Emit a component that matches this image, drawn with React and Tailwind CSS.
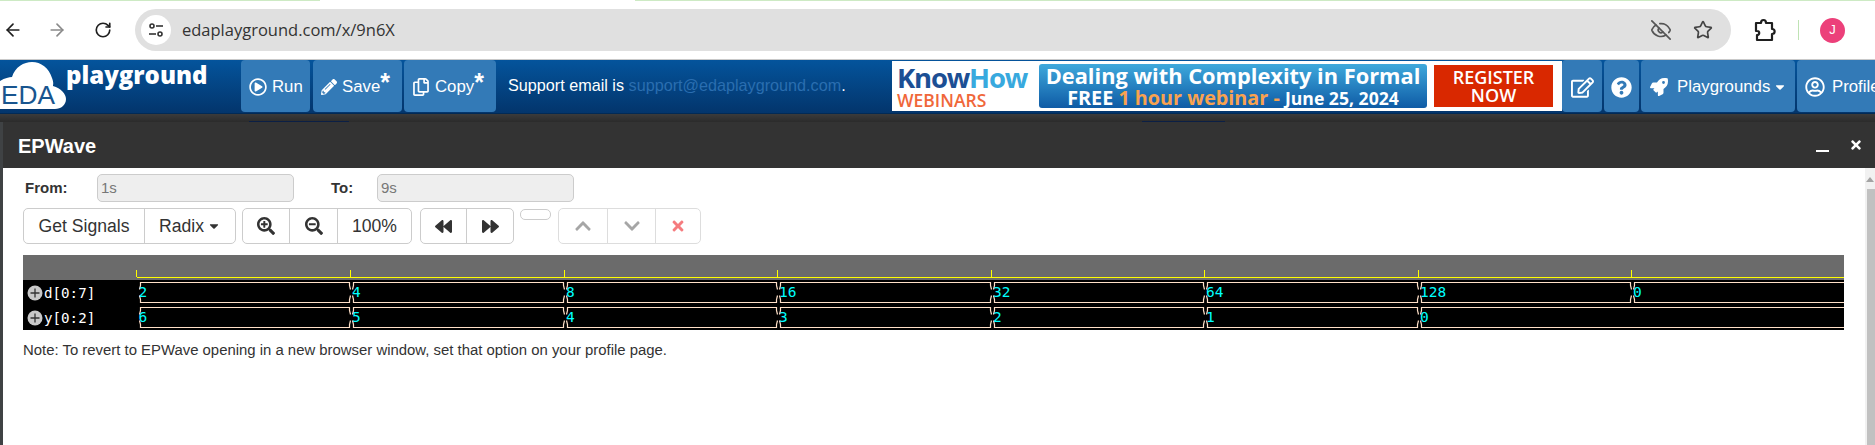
import { ArrowLeft, ArrowRight, RotateCw, EyeOff, Star } from 'lucide-react';
import {
  FaRegPlayCircle,
  FaPencilAlt,
  FaRegCopy,
  FaRegEdit,
  FaQuestionCircle,
  FaRocket,
  FaRegUserCircle,
  FaSearchPlus,
  FaSearchMinus,
  FaBackward,
  FaForward,
  FaChevronUp,
  FaChevronDown,
  FaTimes,
  FaCaretDown,
} from 'react-icons/fa';

const TICKS = [113.5, 327, 541, 754, 968, 1181, 1395, 1608];
const D_VALUES = ['2', '4', '8', '16', '32', '64', '128', '0'];
const Y_VALUES = ['6', '5', '4', '3', '2', '1', '0'];
const WAVE_END = 1821;

function TuneIcon() {
  return (
    <svg width="18" height="18" viewBox="0 0 18 18" fill="none" stroke="#333" strokeWidth="1.6">
      <circle cx="5" cy="5" r="2" />
      <path d="M9 5h7" />
      <circle cx="13" cy="13" r="2" />
      <path d="M2 13h7" />
    </svg>
  );
}

function PuzzleIcon() {
  return (
    <svg width="24" height="26" viewBox="0 0 24 26" fill="none" stroke="#1f1f1f" strokeWidth="2.2" strokeLinejoin="round">
      <path d="M3 6h5c0-4 5-4 5 0h6v6c3.500 0 3.500 5 0 5v6H4v-5c3 0 3-4 0-4H3z" />
    </svg>
  );
}

function Logo() {
  return (
    <div className="flex w-[241px] shrink-0 items-start">
      <svg width="66" height="50" viewBox="0 0 66 50" className="mt-[1px] shrink-0">
        <path
          d="M0 20c5-3 9-4 12-4C15 6 24 1 32 1c9 0 17 6 20 16 2 5 1 7 1 8 8 2 13 8 13 13 0 6-5 10-11 10H0z"
          fill="#fff"
        />
        <text x="1" y="43" fontFamily="Liberation Sans, Arial, sans-serif" fontSize="25" fill="#18558f" textLength="54" lengthAdjust="spacingAndGlyphs">
          EDA
        </text>
      </svg>
      <span className="mt-[-3px] w-[144px] font-['Open_Sans',sans-serif] text-[24px] leading-[36px] font-extrabold text-white">playground</span>
    </div>
  );
}

function NavButton({ className, children }) {
  return (
    <div className={`flex h-[52px] shrink-0 items-center gap-[5px] rounded-[4px] bg-[#337ab7] pt-[2px] text-[16.8px] text-white ${className}`}>
      {children}
    </div>
  );
}

function Asterisk() {
  return <span className="mb-[9px] ml-[-5px] text-[25px] leading-none font-bold">*</span>;
}

function Banner() {
  return (
    <div className="mt-[1px] flex h-[50px] w-[670px] shrink-0 items-center bg-white">
      <div className="ml-[5px] flex w-[142px] shrink-0 flex-col font-['Open_Sans',sans-serif]">
        <div className="text-[27.500px] leading-[27px] font-bold tracking-[-1.2px] whitespace-nowrap text-[#1c4f94]">
          Know<span className="text-[#38a9de]">How</span>
        </div>
        <div className="text-[17.500px] leading-[18px] font-semibold whitespace-nowrap text-[#f0673a]">WEBINARS</div>
      </div>
      <div className="flex h-[44px] w-[388px] shrink-0 flex-col items-center justify-center rounded-[3px] bg-gradient-to-b from-[#3fa9dc] to-[#0f5ba5] font-['Open_Sans',sans-serif] font-bold whitespace-nowrap text-white">
        <div className="text-[21.800px] leading-[24px]">Dealing with Complexity in Formal</div>
        <div className="text-[19.800px] leading-[20px]">
          FREE <span className="text-[#f9a24f]">1 hour webinar -</span> <span className="text-[17.600px]">June 25, 2024</span>
        </div>
      </div>
      <div className="ml-[7px] flex h-[42px] w-[119px] shrink-0 flex-col items-center justify-center bg-[#d92800] font-['Open_Sans',sans-serif] text-[18px] leading-[18px] font-semibold text-white">
        <div>REGISTER</div>
        <div>NOW</div>
      </div>
    </div>
  );
}

function ToolButton({ className = '', children }) {
  return (
    <div className={`flex h-full items-center justify-center border-r border-[#ccc] last:border-r-0 ${className}`}>{children}</div>
  );
}

function ToolGroup({ className = '', children }) {
  return (
    <div className={`flex h-[36px] shrink-0 rounded-[5px] border border-[#ccc] text-[17.6px] text-[#333] ${className}`}>{children}</div>
  );
}

function WaveRow({ top, values }) {
  const t = top + 0.5;
  const bottom = t + 20;
  const mid = t + 10;
  let d = '';
  values.forEach((_, i) => {
    const last = i + 1 === values.length;
    const left = Math.round(TICKS[i]) + 2.5;
    if (last) {
      d += `M${left} ${mid - 3}L${left + 1} ${mid - 7}V${t}H${WAVE_END}`;
      d += `M${left} ${mid + 3}L${left + 1} ${mid + 7}V${bottom}H${WAVE_END}`;
      return;
    }
    const right = Math.round(TICKS[i + 1]) - 0.5;
    d += `M${left} ${mid - 3}L${left + 1} ${mid - 7}V${t}H${right}V${mid - 7}L${right + 1} ${mid - 3}`;
    d += `M${left} ${mid + 3}L${left + 1} ${mid + 7}V${bottom}H${right}V${mid + 7}L${right + 1} ${mid + 3}`;
  });
  return (
    <>
      <path d={d} fill="none" stroke="#ffe0c8" strokeWidth="1.2" />
      {values.map((value, i) => (
        <text key={i} x={TICKS[i] + 2} y={top + 15} fill="#00ffff" fontFamily="DejaVu Sans Mono, monospace" fontSize="14.500">
          {value}
        </text>
      ))}
    </>
  );
}

function SignalLabel({ y, label }) {
  return (
    <>
      <circle cx="12" cy={y - 5} r="7.5" fill="#c8c8c8" />
      <path d={`M7.500 ${y - 5}h9M12 ${y - 9.500}v9`} stroke="#333" strokeWidth="1.300" />
      <text x="21" y={y} fill="#fff" fontFamily="DejaVu Sans Mono, monospace" fontSize="14.200">
        {label}
      </text>
    </>
  );
}

function Waveform() {
  return (
    <svg width="1821" height="75" viewBox="0 0 1821 75" className="block">
      <rect width="1821" height="25" fill="#6b6b6b" />
      <rect y="25" width="1821" height="50" fill="#000" />
      <rect x="114" y="22" width="1707" height="1" fill="#ffff00" />
      {TICKS.map((x) => (
        <rect key={x} x={Math.round(x - 0.5)} y="15" width="1" height="7" fill="#ffff00" />
      ))}
      <SignalLabel y={43} label="d[0:7]" />
      <SignalLabel y={68} label="y[0:2]" />
      <WaveRow top={27} values={D_VALUES} />
      <WaveRow top={52} values={Y_VALUES} />
    </svg>
  );
}

export default function App() {
  return (
    <div className="flex h-[445px] w-[1875px] flex-col overflow-hidden bg-white font-['Liberation_Sans',Arial,sans-serif]">
      {/* browser chrome */}
      <div className="flex h-[59px] shrink-0 flex-col">
        <div className="flex h-px shrink-0">
          <div className="w-[320px] bg-[#cdeac4]" />
          <div className="ml-[315px] flex-1 bg-[#cdeac4]" />
        </div>
        <div className="flex flex-1 items-center">
          <ArrowLeft size={20} strokeWidth={2} className="ml-[3px] text-[#1f1f1f]" />
          <ArrowRight size={20} strokeWidth={2} className="ml-[24px] text-[#8a8a8a]" />
          <RotateCw size={18} strokeWidth={2.2} className="ml-[27px] text-[#1f1f1f]" />
          <div className="ml-[23px] flex h-[42px] w-[1596px] items-center rounded-full bg-[#e0e0e0]">
            <div className="ml-[6px] flex h-[30px] w-[30px] items-center justify-center rounded-full bg-white">
              <TuneIcon />
            </div>
            <span className="ml-[11px] font-['Open_Sans',sans-serif] text-[16.500px] text-[#333]">edaplayground.com/x/9n6X</span>
            <div className="flex-1" />
            <EyeOff size={22} strokeWidth={1.800} className="text-[#555]" />
            <Star size={20} strokeWidth={2} className="ml-[21px] mr-[18px] text-[#444]" />
          </div>
          <div className="ml-[22px]">
            <PuzzleIcon />
          </div>
          <div className="ml-[21px] h-[20px] w-px bg-[#bfe3b4]" />
          <div className="ml-[21px] flex h-[25px] w-[25px] items-center justify-center rounded-full bg-[#ec407a] text-[13px] text-white">J</div>
        </div>
      </div>

      {/* site navbar */}
      <div className="flex h-[54px] shrink-0 items-start border-t border-[#c9c9c9] bg-gradient-to-b from-[#04549c] to-[#03356c]">
        <Logo />
        <NavButton className="w-[69px] pl-[8px]">
          <FaRegPlayCircle size={18} />
          Run
        </NavButton>
        <NavButton className="ml-[3px] w-[89px] pl-[8px]">
          <FaPencilAlt size={16} />
          <span>Save</span>
          <Asterisk />
        </NavButton>
        <NavButton className="ml-[2px] w-[92px] pl-[8px]">
          <FaRegCopy size={18} />
          <span>Copy</span>
          <Asterisk />
        </NavButton>
        <div className="ml-[12px] flex h-[52px] w-[384px] shrink-0 items-center pb-[1px] text-[16.200px] whitespace-nowrap text-white">
          Support email is&nbsp;<span className="text-[#2a6eb0]">support@edaplayground.com</span>.
        </div>
        <Banner />
        <NavButton className="w-[40px] justify-center">
          <FaRegEdit size={23} />
        </NavButton>
        <NavButton className="ml-[2px] w-[35px] justify-center">
          <FaQuestionCircle size={21} />
        </NavButton>
        <NavButton className="ml-[2px] w-[154px] pl-[9px]">
          <FaRocket size={18} />
          <span className="ml-[4px]">Playgrounds</span>
          <FaCaretDown size={14} className="ml-[-2px]" />
        </NavButton>
        <NavButton className="ml-[2px] w-[100px] pl-[8px]">
          <FaRegUserCircle size={20} />
          <span className="ml-[2px]">Profile</span>
        </NavButton>
      </div>

      {/* page behind the modal */}
      <div className="flex h-[9px] shrink-0 items-end border-t border-[#022a55] bg-gradient-to-b from-[#3b3b3b] to-[#2b2b2b] pl-[249px]">
        <div className="h-px w-[100px] bg-[#0b1f45]" />
        <div className="ml-[793px] h-px w-[83px] bg-[#0b1f45]" />
      </div>

      <div className="flex min-h-0 flex-1">
        <div className="w-[3px] shrink-0 bg-[#3f4244]" />
        <div className="flex min-w-0 flex-1 flex-col">
          <div className="flex h-[46px] shrink-0 items-center bg-[#333] text-white">
            <span className="ml-[15px] pt-[2px] text-[20px] font-bold">EPWave</span>
            <div className="flex-1" />
            <div className="mt-[11px] h-[2px] w-[13px] bg-white" />
            <FaTimes size={14} className="ml-[20px] mr-[12px]" />
          </div>

          <div className="flex min-h-0 flex-1 bg-white">
            <div className="flex min-w-0 flex-1 flex-col pl-[20px] pt-[6px]">
              <div className="flex h-[28px] items-center text-[15px] text-[#333]">
                <span className="ml-[2px] w-[72px] font-bold">From:</span>
                <div className="flex h-full w-[197px] items-center rounded-[5px] border border-[#ccc] bg-[#eee] pl-[3px] text-[#777]">1s</div>
                <span className="ml-[37px] w-[46px] font-bold">To:</span>
                <div className="flex h-full w-[197px] items-center rounded-[5px] border border-[#ccc] bg-[#eee] pl-[3px] text-[#777]">9s</div>
              </div>

              <div className="mt-[6px] flex items-start">
                <ToolGroup className="w-[213px]">
                  <ToolButton className="w-[121px]">Get Signals</ToolButton>
                  <ToolButton className="flex-1 gap-[3px]">
                    Radix
                    <FaCaretDown size={14} />
                  </ToolButton>
                </ToolGroup>
                <ToolGroup className="ml-[6px] w-[170px]">
                  <ToolButton className="w-[47px]">
                    <FaSearchPlus size={18} />
                  </ToolButton>
                  <ToolButton className="w-[48px]">
                    <FaSearchMinus size={18} />
                  </ToolButton>
                  <ToolButton className="flex-1">100%</ToolButton>
                </ToolGroup>
                <ToolGroup className="ml-[8px] w-[94px]">
                  <ToolButton className="w-[46px]">
                    <FaBackward size={17} />
                  </ToolButton>
                  <ToolButton className="flex-1">
                    <FaForward size={17} />
                  </ToolButton>
                </ToolGroup>
                <div className="ml-[6px] mt-[1px] h-[11px] w-[31px] shrink-0 rounded-[5px] border border-[#ccc]" />
                <ToolGroup className="ml-[7px] w-[143px] opacity-65">
                  <ToolButton className="w-[49px]">
                    <FaChevronUp size={18} className="text-[#777]" />
                  </ToolButton>
                  <ToolButton className="w-[48px]">
                    <FaChevronDown size={18} className="text-[#777]" />
                  </ToolButton>
                  <ToolButton className="flex-1">
                    <FaTimes size={16} className="text-[#f0353a]" />
                  </ToolButton>
                </ToolGroup>
              </div>

              <div className="mt-[11px]">
                <Waveform />
              </div>
              <p className="mt-[12px] text-[14.900px] leading-[16px] text-[#333]">
                Note: To revert to EPWave opening in a new browser window, set that option on your profile page.
              </p>
            </div>

            {/* scrollbar */}
            <div className="flex w-[10px] shrink-0 flex-col items-end bg-[#f1f1f1]">
              <div className="mt-[9px] mr-[1px] h-0 w-0 border-x-[4px] border-b-[5px] border-x-transparent border-b-[#a3a3a3]" />
              <div className="mt-[7px] w-[8px] flex-1 bg-[#c1c1c1]" />
            </div>
          </div>
        </div>
      </div>
    </div>
  );
}
